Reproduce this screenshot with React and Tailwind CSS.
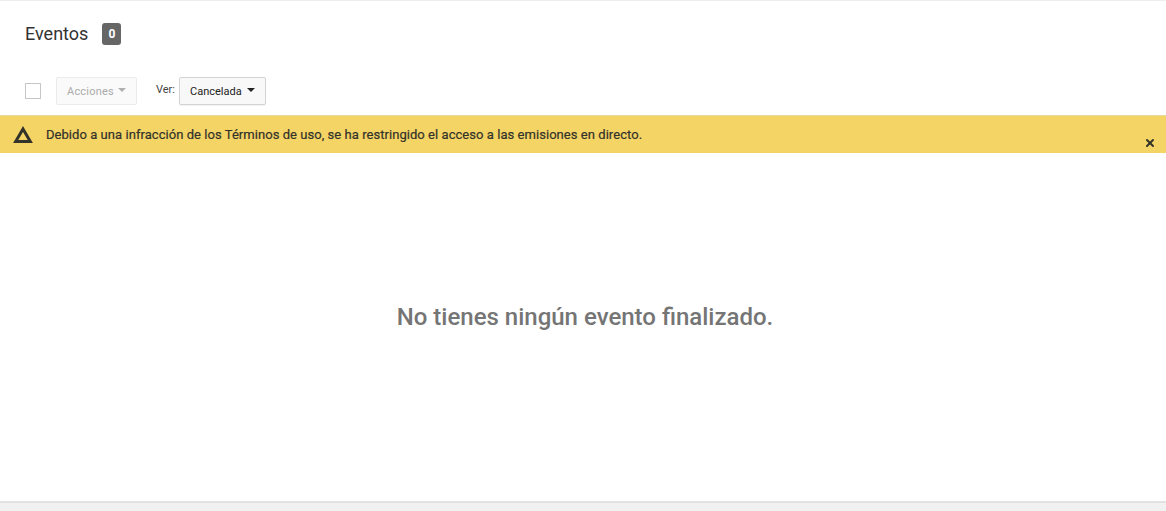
import { X } from "lucide-react";

const Caret = ({ className }) => (
  <span className={`inline-block w-0 h-0 border-x-[4px] border-x-transparent border-t-[4px] ${className}`} />
);

const App = () => {
  return (
    <div className="w-[1166px] h-[511px] flex flex-col bg-[#f1f1f1] overflow-hidden font-['Roboto',sans-serif]">
      <div className="h-[503px] bg-white border-t border-[#eeeeee] border-b-2 border-b-[#e2e2e2] flex flex-col">
        {/* Title */}
        <div className="h-[76px] pl-[25px] pt-[22px] flex items-start">
          <h1 className="text-[18px] leading-[22px] text-[#333333]">Eventos</h1>
          <span className="ml-[14px] w-[19px] h-[22px] rounded-[3px] bg-[#666666] text-white text-[12px] font-bold flex items-center justify-center">
            0
          </span>
        </div>

        {/* Toolbar */}
        <div className="h-[38px] pl-[25px] flex items-start">
          <div className="mt-[6px] w-[16px] h-[16px] border border-[#c6c6c6] bg-white" />
          <button className="ml-[15px] w-[81px] h-[28px] border border-[#ebebeb] rounded-[2px] bg-[#fafafa] text-[11px] text-[#aaaaaa] flex items-center pl-[10px] pt-[2px] gap-[4px] tracking-[0.02em]">
            Acciones
            <Caret className="border-t-[#b0b0b0] -mt-[4px]" />
          </button>
          <span className="ml-[19px] mt-[6px] text-[11px] leading-[13px] text-[#444444]">Ver:</span>
          <button className="ml-[4px] w-[87px] h-[28px] border border-[#d3d3d3] rounded-[2px] bg-[#f8f8f8] shadow-[0_1px_1px_rgba(0,0,0,0.06)] text-[11px] text-[#222222] flex items-center pl-[10px] pt-[2px] gap-[5px]">
            Cancelada
            <Caret className="border-t-[#222222] -mt-[4px]" />
          </button>
        </div>

        {/* Warning */}
        <div className="h-[38px] bg-[#f4d465] border-t border-[#e8d9a0] flex relative">
          <svg width="20" height="17" viewBox="0 0 20 17" className="ml-[13px] mt-[10px]">
            <path d="M10 3 L17.3 15.5 H2.7 Z" fill="none" stroke="#34332a" strokeWidth="3" strokeLinejoin="miter" />
          </svg>
          <p className="ml-[13px] mt-[11px] text-[13px] leading-[16px] tracking-[0.05px] text-[#33322a] [-webkit-text-stroke:0.2px_#33322a]">
            Debido a una infracción de los Términos de uso, se ha restringido el acceso a las emisiones en directo.
          </p>
          <X className="absolute right-[10px] bottom-[4px] w-[12px] h-[12px] text-[#33322a]" strokeWidth={4} />
        </div>

        {/* Empty state */}
        <div className="flex-1 flex justify-center pt-[149px] pl-[4px]">
          <p className="text-[24px] leading-[30px] font-medium text-[#757575]">No tienes ningún evento finalizado.</p>
        </div>
      </div>
    </div>
  );
};

export default App;
